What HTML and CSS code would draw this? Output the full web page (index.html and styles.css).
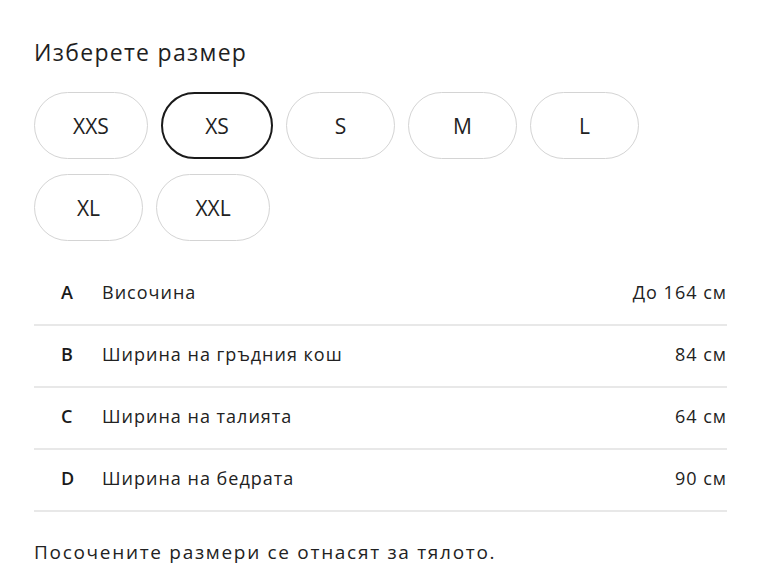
FILE: index.html
```html
<!DOCTYPE html>
<html lang="bg">
<head>
<meta charset="utf-8">
<link rel="stylesheet" href="styles.css">
</head>
<body>
<div class="panel">
  <h2 class="title">Изберете размер</h2>
  <div class="sizes">
    <button class="size size-wide">XXS</button>
    <button class="size selected">XS</button>
    <button class="size">S</button>
    <button class="size">M</button>
    <button class="size">L</button>
    <button class="size">XL</button>
    <button class="size size-wide">XXL</button>
  </div>
  <div class="measures">
    <div class="row"><span class="key">A</span><span class="label">Височина</span><span class="value">До 164 см</span></div>
    <div class="row"><span class="key">B</span><span class="label">Ширина на гръдния кош</span><span class="value">84 см</span></div>
    <div class="row"><span class="key">C</span><span class="label">Ширина на талията</span><span class="value">64 см</span></div>
    <div class="row"><span class="key">D</span><span class="label">Ширина на бедрата</span><span class="value">90 см</span></div>
  </div>
  <p class="note">Посочените размери се отнасят за тялото.</p>
</div>
</body>
</html>
```
FILE: styles.css
```css
html, body {
  margin: 0;
  padding: 0;
  background: #ffffff;
}
body {
  font-family: "Open Sans", "Noto Sans", "DejaVu Sans", sans-serif;
  color: #222222;
}
.panel {
  width: 693px;
  padding: 37px 0 0 34px;
}
.title {
  margin: 0;
  font-size: 23px;
  font-weight: 400;
  line-height: 30px;
  letter-spacing: 1.3px;
  color: #1f1f1f;
}
.sizes {
  display: flex;
  flex-wrap: wrap;
  column-gap: 13px;
  row-gap: 15px;
  margin-top: 25px;
  width: 620px;
}
.size {
  box-sizing: border-box;
  width: 109px;
  height: 67px;
  border: 1px solid #d4d4d4;
  border-radius: 34px;
  background: #fff;
  font-family: inherit;
  font-size: 21px;
  font-weight: 400;
  color: #222;
  padding: 0;
}
.size-wide {
  width: 114px;
}
.size.selected {
  width: 112px;
  border: 2.5px solid #1a1a1a;
}
.measures {
  margin-top: 23px;
}
.row {
  display: flex;
  align-items: center;
  box-sizing: border-box;
  height: 62px;
  padding-bottom: 4px;
  border-bottom: 2px solid #e8e8e8;
  font-size: 18px;
  letter-spacing: 1px;
}
.key {
  width: 68px;
  padding-left: 27px;
  box-sizing: border-box;
  font-weight: 600;
  color: #1a1a1a;
}
.label {
  flex: 1;
}
.value {
  text-align: right;
}
.note {
  margin: 28px 0 0;
  font-size: 19px;
  line-height: 24px;
  letter-spacing: 1.7px;
  color: #222;
}
```
